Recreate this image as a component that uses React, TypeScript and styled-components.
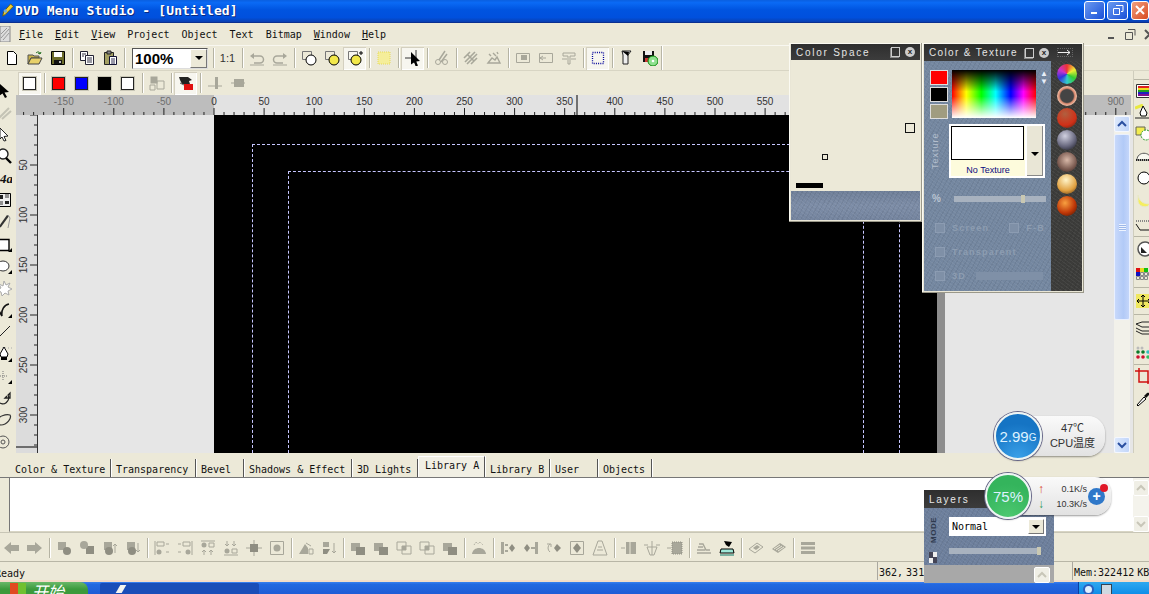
import React, { ReactNode } from 'react';
import styled, { createGlobalStyle } from 'styled-components';

const Global = createGlobalStyle`
  html, body { margin: 0; padding: 0; background: #ece9d8; overflow: hidden; }
  * { box-sizing: border-box; }
`;

const mono = `"DejaVu Sans Mono", "Liberation Mono", monospace`;
const sans = `"Liberation Sans", Arial, "Noto Sans CJK SC", sans-serif`;
const g = '#a8a79a';
const gd = '#8f8e82';
const grain = `
  repeating-linear-gradient(37deg, rgba(255,255,255,.05) 0 1px, transparent 1px 3px),
  repeating-linear-gradient(-61deg, rgba(0,0,0,.06) 0 1px, transparent 1px 4px)`;

const icons: Record<string, ReactNode> = {
  new: <path d="M3.5 1.5h6l3 3v10h-9z" fill="#fff" stroke="#000" />,
  open: <><path d="M1 5h5l1 1h5v2H4l-3 6z" fill="#c9b24a" stroke="#555" /><path d="M1 14l3-6h11l-3 6z" fill="#e8d16a" stroke="#444" /><path d="M9 3c2-2 4-1 4 1m0 0l-2-1m2 1l1-2" fill="none" stroke="#1a6a1a" /></>,
  save: <><path d="M1.5 1.5h13v13h-13z" fill="#6b6b2a" stroke="#000" /><path d="M4 2h8v5H4z" fill="#fff" /><path d="M4 10h8v4H4z" fill="#111" /><path d="M9 11h2v2H9z" fill="#bbb" /></>,
  copy: <><path d="M1.5 1.5h7v9h-7z" fill="#fff" stroke="#223" /><path d="M6.5 5.5h8v9h-8z" fill="#fff" stroke="#223" /><path d="M8 8h5M8 10h5M8 12h5M3 4h4M3 6h2" stroke="#334" /></>,
  paste: <><path d="M2.5 2.5h9v12h-9z" fill="#a39f62" stroke="#222" /><path d="M5 1h4v3H5z" fill="#888" stroke="#222" /><path d="M7.5 6.5h7v8h-7z" fill="#fff" stroke="#113" /><path d="M9 9h4M9 11h4M9 13h4" stroke="#335" /></>,
  undo: <><path d="M3 6h8a3 3 0 010 7H5" fill="none" stroke={g} strokeWidth="1.5" /><path d="M1 6l4-3v6z" fill={g} /><path d="M1 15h14" stroke={g} /></>,
  redo: <><path d="M13 6H5a3 3 0 000 7h6" fill="none" stroke={g} strokeWidth="1.5" /><path d="M15 6l-4-3v6z" fill={g} /><path d="M1 15h14" stroke={g} /></>,
  shape1: <><path d="M1.5 1.5h9v8h-9z" fill="none" stroke="#777" /><circle cx="10" cy="10" r="5" fill="#fff" stroke="#000" /></>,
  shape2: <><path d="M1.5 1.5h9v8h-9z" fill="none" stroke="#777" /><circle cx="10" cy="10" r="5" fill="#f2e84a" stroke="#000" /></>,
  shape3: <><path d="M1.5 1.5h9v8h-9z" fill="none" stroke="#777" /><circle cx="9" cy="10" r="5" fill="#f2e84a" stroke="#000" /><path d="M14 1v4M12 3h4" stroke="#000" /></>,
  dots: <path d="M2 2h12v12H2z" fill="#f5ee9a" stroke="#e6da58" strokeDasharray="1 1" />,
  pick: <><path d="M0 8h6M11 0v16" stroke="#333" /><path d="M6 2l9 9-4 .5 2 4-2 1-2-4-3 2z" fill="#000" /></>,
  cut: <><path d="M11 1L5 10M13 4L7 12" stroke={g} strokeWidth="1.5" /><circle cx="4" cy="12" r="2.5" fill="none" stroke={g} /><circle cx="11" cy="12" r="2.5" fill="none" stroke={g} /></>,
  hatch: <path d="M2 12L12 2M4 14L14 4M1 8l6-6M8 14l6-6M5 5l6 6" stroke={g} strokeWidth="1.6" />,
  spark: <path d="M3 4l2 2M11 2l1 2M2 13l4-5 3 2 2-3 3 6zM7 3l3 3" stroke={g} fill="none" strokeWidth="1.4" />,
  boxa: <><path d="M1.5 3.5h13v9h-13z" fill="none" stroke={g} /><path d="M6 5h6v5H6z" fill={g} /></>,
  boxb: <><path d="M1.5 3.5h13v9h-13zM1 8h7" fill="none" stroke={g} /><path d="M5 6L2 8l3 2" fill="none" stroke={g} /></>,
  boxc: <path d="M2 3h12v3H9v8H7V6H2zM1 9h5m4 0h5" fill="none" stroke={g} />,
  frame: <path d="M2.5 2.5h11v11h-11z" fill="none" stroke="#00009a" strokeDasharray="1 1.2" strokeWidth="1.3" />,
  wand: <><path d="M3 1h9l-3 4v9h-5V5z" fill="#eee" stroke="#222" /><path d="M3 1l7 1-1 4z" fill="#000" /></>,
  disk: <><path d="M1 1h11v11H1z" fill="#111" /><path d="M3 1h7v4H3z" fill="#eee" /><path d="M3 8h6v4H3z" fill="#c33" /><circle cx="11" cy="11" r="5" fill="#8ee08e" stroke="#0a8a0a" /><circle cx="11" cy="11" r="1.3" fill="#fff" /></>,
  layout2: <><path d="M1.5 1.5h7v7h-7z" fill={g} /><path d="M8 6h7v8H8z" fill="none" stroke={g} /><path d="M1 10h5v5H1z" fill="none" stroke={g} /></>,
  over1: <><path d="M1 3h9v8H1z" fill={g} /><path d="M6 7h9v8H6z" fill={gd} /></>,
  over2: <><path d="M1 2h9v8H1z" fill="none" stroke={g} /><path d="M6 6h9v8H6z" fill="none" stroke={g} /><path d="M6 6h4v4H6z" fill={g} /></>,
  mask: <><path d="M1 2h9l4 3-3 1 1 3H4L2 5z" fill="#222" /><path d="M6 9h9v6H6z" fill="#e01010" /><path d="M2 8l4 2" stroke="#555" /></>,
  weight: <><path d="M1 11h14" stroke={g} /><path d="M8 2h3v12H8z" fill={g} /></>,
  weight2: <><path d="M1 8h14" stroke={g} /><path d="M4 4h10v8H4z" fill={g} /></>,
  d1: <><path d="M2 2h8v8H2z" fill={g} /><circle cx="11" cy="11" r="4" fill={gd} /></>,
  d2: <><path d="M7 6h8v8H7z" fill={gd} /><circle cx="5" cy="5" r="4" fill={g} /></>,
  d3: <><path d="M2 2h8v8H2z" fill={g} /><circle cx="7" cy="11" r="4" fill={gd} /><path d="M13 13V4m-2 2l2-2 2 2" fill="none" stroke={g} /></>,
  d4: <><path d="M2 2h8v8H2z" fill={g} /><circle cx="7" cy="11" r="4" fill={gd} /><path d="M13 3v9m-2-2l2 2 2-2" fill="none" stroke={g} /></>,
  al1: <><path d="M1 1v14" stroke={g} /><path d="M3 2h7v4H3z" fill="none" stroke={g} /><circle cx="5" cy="12" r="2.5" fill={g} /><path d="M15 4h-3m0 8h3" stroke={g} /></>,
  al2: <><path d="M15 1v14" stroke={g} /><path d="M6 2h7v4H6z" fill="none" stroke={g} /><circle cx="11" cy="12" r="2.5" fill={g} /><path d="M1 4h3m0 8H1" stroke={g} /></>,
  al3: <><path d="M1 1h14" stroke={g} /><circle cx="4" cy="5" r="2.5" fill={g} /><path d="M9 3h5v4H9z" fill="none" stroke={g} /><path d="M4 15v-5m-2 2l2-2 2 2M11 15v-5m-2 2l2-2 2 2" fill="none" stroke={g} /></>,
  al4: <><path d="M1 15h14" stroke={g} /><circle cx="4" cy="11" r="2.5" fill={g} /><path d="M9 9h5v4H9z" fill="none" stroke={g} /><path d="M4 1v5M2 4l2 2 2-2M11 1v5M9 4l2 2 2-2" fill="none" stroke={g} /></>,
  al5: <><path d="M0 8h16M8 0v16" stroke={g} /><path d="M4 4h8v8H4z" fill={gd} /></>,
  al6: <><path d="M1.5 1.5h13v13h-13z" fill="none" stroke={g} /><circle cx="8" cy="8" r="3.5" fill={g} /></>,
  tr1: <><path d="M1 14l6-10 3 4v6z" fill={g} /><path d="M11 14h4V9h-4zM8 3l5 3" stroke={g} fill="none" /></>,
  tr2: <><path d="M2 2h6v5H2z" fill={g} /><path d="M2 9h7l-3 5H2z" fill={gd} /><path d="M13 3v10m-2-2l2 2 2-2" stroke={g} fill="none" /></>,
  abc: <><path d="M1 14c1-8 13-8 14 0z" fill={g} /><path d="M3 5l2-3 2 2 2-2 3 3" stroke={g} fill="none" strokeDasharray="1 1" /></>,
  n1: <><path d="M1 2h3v12H1zM5 4h3v2H5zM5 10h3v2H5z" fill={g} /><path d="M9 8l3-4 3 4-3 4z" fill={gd} /></>,
  n2: <><path d="M1 8l3-4 3 4-3 4z" fill={gd} /><path d="M12 2h3v12h-3zM8 7h4v2H8z" fill={g} /></>,
  n3: <><path d="M4 4a5 5 0 000 8" stroke={g} fill="none" /><path d="M8 8l3-4 4 4-4 4z" fill={gd} /><path d="M1 4h4v3" stroke={g} fill="none" /></>,
  n4: <><path d="M1.5 1.5h13v13h-13z" fill="none" stroke={g} /><path d="M4 8l4-5 4 5-4 5z" fill={gd} /></>,
  n5: <path d="M1 15L6 1h4l5 14zM5 10h6M6 7h4" stroke={g} fill="none" />,
  m1: <><path d="M0 8h4" stroke={g} /><path d="M5 2h10v12H5z" fill={g} /><path d="M9 2v12" stroke="#ece9d8" /></>,
  m2: <><path d="M0 5h4M12 5h4M8 1v14" stroke={g} /><path d="M3 7h10l-3 8H6z" fill="none" stroke={g} /></>,
  m3: <><path d="M0 8h4" stroke={g} /><path d="M5 2h10v12H5z" fill={g} stroke={gd} strokeDasharray="1 1" /></>,
  e1: <path d="M1 13h14M3 4h4l3 6h4M1 10h8M2 7h5" stroke={g} fill="none" strokeWidth="1.4" />,
  e2: <><path d="M2 9h12l1 4H1z" fill="#9fe8d8" stroke="#000" /><path d="M5 1l8 1-3 5-3-2z" fill="#000" /><path d="M1 15h14" stroke="#0a7a6a" /></>,
  p1: <><path d="M1 9l8-6 6 4-8 6z" fill="none" stroke={g} /><path d="M5 8l4-3 3 2-4 3z" fill={g} /></>,
  p2: <><path d="M1 9l8-6 6 4-8 6z" fill={g} /><path d="M3 9l6-4M5 10l6-4M7 11l6-4" stroke="#ece9d8" /></>,
  st: <><path d="M1 2h14v3H1zM1 6.5h14v3H1zM1 11h14v3H1z" fill={g} /></>,
  arrL: <path d="M0 8l7-6v3h8v6H7v3z" fill={g} />,
  arrR: <path d="M15 8L8 2v3H0v6h8v3z" fill={g} />,
  arrow: <path d="M3 1l10 9-4.500 .5 2.500 4.500-2 1-2.500-4.500L3 14z" fill="#000" />,
  ghost: <path d="M3 14L13 4M6 15L15 7" stroke="#c4c3b5" strokeWidth="2" />,
  arrow2: <path d="M4 2l8 8-4 .5 2 4-2 .5-2-4-2 2z" fill="#fff" stroke="#222" />,
  mag: <><circle cx="7" cy="6" r="5" fill="#fff" stroke="#222" strokeWidth="1.4" /><path d="M10 10l5 5" stroke="#000" strokeWidth="2.4" /></>,
  text: <text x="4" y="13" fontFamily="Liberation Serif, serif" fontStyle="italic" fontWeight="700" fontSize="13" fill="#111">4a</text>,
  grid: <><path d="M1.500 1.500h13v13h-13z" fill="#eee" stroke="#000" /><path d="M4 3h3v4H4zM9 9h4v3H9z" fill="#222" /><path d="M9 3h4M9 5h4M3 10h4M3 12h4" stroke="#333" /></>,
  knife: <><path d="M11 1L3 12l-2 3 4-2L13 2z" fill="#333" /><path d="M12 1l2 3-2 10" stroke="#999" fill="none" /></>,
  rect: <><path d="M1 3.500h12v11H1z" fill="#fff" stroke="#000" strokeWidth="1.4" /><path d="M16 12v4h-4z" fill="#000" /></>,
  oval: <><ellipse cx="7" cy="8" rx="6" ry="5" fill="#fff" stroke="#333" /><path d="M16 12v4h-4z" fill="#000" /></>,
  star: <path d="M8 1l2 4 4-2-2 4 4 2-4 2 1 4-4-2-3 3-1-4-4-2 4-2-2-4 4 2z" fill="#fff" stroke="#aaa" />,
  check: <><path d="M13 2C8 3 5 8 6 14L3 9" stroke="#111" fill="none" strokeWidth="1.6" /><path d="M16 12v4h-4z" fill="#000" /></>,
  line: <path d="M1 15L14 2" stroke="#222" />,
  pen: <><path d="M8 1l4 7-1 3H5L4 8z" fill="#fff" stroke="#000" /><path d="M5 11h6v3H5z" fill="#000" /><path d="M16 12v4h-4z" fill="#000" /><path d="M0 2h16" stroke="#aaa" strokeDasharray="1 2" /></>,
  plus: <><path d="M2 8h9M7 3v9" stroke="#777" strokeDasharray="1 1" /><path d="M16 12v4h-4z" fill="#000" /></>,
  rot: <path d="M2 4a6 6 0 1010 1l2-2v5H9l2-2" fill="none" stroke="#222" strokeWidth="1.3" />,
  blob: <path d="M1 9c1-5 9-7 13-6 2 3-3 10-9 10-3 0-4-2-4-4z" fill="none" stroke="#333" strokeWidth="1.2" />,
  ring: <><circle cx="7" cy="8" r="6" fill="none" stroke="#555" /><circle cx="7" cy="8" r="2" fill="none" stroke="#555" /></>,
  rainbow: <><path d="M1.500 1.500h14v13h-14z" fill="#fff" stroke="#333" /><path d="M3 3h13v2H3z" fill="#e02020" /><path d="M3 5h13v2H3z" fill="#eedc20" /><path d="M3 7h13v2H3z" fill="#20a020" /><path d="M3 9h13v2H3z" fill="#2020c0" /><path d="M3 11h13v2H3z" fill="#801090" /></>,
  rpen: <><path d="M0 4l8-3" stroke="#e8e840" strokeWidth="3" /><path d="M8 2l4 7-1 3H6L5 9z" fill="#fff" stroke="#000" /><path d="M0 14h16" stroke="#222" /></>,
  rsel: <><path d="M1 2h9v8H1z" fill="#f2ec50" stroke="#665" /><circle cx="11" cy="10" r="5" fill="#fff" stroke="#2a9a2a" strokeDasharray="2 1" /></>,
  rruler: <><path d="M2 13c0-9 14-9 14 0z" fill="#f8f8f0" stroke="#555" /><path d="M1 13h15" stroke="#222" strokeWidth="2" strokeDasharray="1 1" /></>,
  rcircle: <circle cx="9" cy="8" r="6" fill="#fff" stroke="#000" />,
  rban: <path d="M3 1c1 6 5 9 12 9-2 4-10 4-12-2z" fill="#f5ee60" stroke="#e8e8c8" />,
  rpara: <><path d="M1 4h15" stroke="#888" strokeWidth="2" strokeDasharray="1 1" /><path d="M1 7l4 6h11" stroke="#111" fill="none" /></>,
  rbtn: <><circle cx="10" cy="8" r="7" fill="#fff" stroke="#555" strokeWidth="1.5" /><path d="M6 12V6l6 6z" fill="#222" /></>,
  rclr: <><path d="M1 2h4v4H1z" fill="#e01010" /><path d="M5 2h4v4H5z" fill="#e8d820" /><path d="M9 2h4v4H9z" fill="#10c010" /><path d="M1 6h4v4H1z" fill="#1010c0" /><path d="M5.500 6.500h3v3h-3zM9.500 6.500h3v3h-3zM13.500 6.500h3v3h-3zM1.500 10.500h3v3h-3zM5.500 10.500h3v3h-3zM9.500 10.500h3v3h-3z" fill="none" stroke="#888" /></>,
  rmove: <><path d="M1 1h15v14H1z" fill="#f0e860" /><path d="M8 2v12M2 8h13M8 2L6 4m2-2l2 2M8 14l-2-2m2 2l2-2M2 8l2-2M2 8l2 2M15 8l-2-2m2 2l-2 2" stroke="#000" fill="none" /></>,
  rlay: <path d="M1 5l6-2h9M1 5l6 3h9M1 9l6 3h9M1 12l6 3h9" stroke="#222" fill="none" />,
  rdots: <><circle cx="3" cy="4" r="1.500" fill="#bbb" /><circle cx="7" cy="4" r="1.500" fill="#bbb" /><circle cx="3" cy="8" r="1.800" fill="#0a7a2a" /><circle cx="8" cy="8" r="1.800" fill="#0a7a2a" /><circle cx="13" cy="8" r="1.800" fill="#30c0c0" /><circle cx="3" cy="13" r="1.800" fill="#d01030" /><circle cx="8" cy="13" r="1.800" fill="#d01030" /><circle cx="13" cy="13" r="1.800" fill="#30c060" /></>,
  rcrop: <path d="M4 0v14h12M0 3h13v13" stroke="#d01010" fill="none" strokeWidth="1.500" />,
  rdrop: <><path d="M3 15l-1-1 7-8 2 2z" fill="#fff" stroke="#000" /><path d="M9 5l3-3c2-1 3 1 2 2l-3 3z" fill="#111" /></>,
  logo: <><path d="M2 15l1-5 8-9 3 3-9 9z" fill="#f4d030" stroke="#665a10" /><circle cx="5" cy="9" r="2" fill="#7ac" /></>,
  doc: <><path d="M0 0h10v16H0z" fill="#ddd" stroke="#888" /><path d="M1 12L9 3M1 8l6-6M3 14l6-7" stroke="#999" /></>,
};

const Icon = ({ name, size = 16 }: { name: string; size?: number }) => (
  <svg width={size} height={size} viewBox="0 0 16 16" style={{ display: 'block', flex: 'none' }}>{icons[name]}</svg>
);

const Root = styled.div`
  position: relative; width: 1149px; height: 594px; overflow: hidden;
  display: flex; flex-direction: column; background: #ece9d8;
  font-family: ${mono}; font-size: 10px; color: #111;
`;
const TitleBar = styled.div`
  height: 23px; flex: none; display: flex; align-items: center; padding: 0 0 2px 1px;
  background: linear-gradient(180deg, #0a5fe0 0%, #0a6af5 12%, #0054e0 45%, #0050dd 80%, #0a3fb0 100%);
  border-bottom: 1px solid #0a2f90;
`;
const TitleText = styled.div`
  flex: 1; color: #fff; font: 700 13px ${mono}; letter-spacing: .13px; text-shadow: 1px 1px 0 #0a2a80; white-space: nowrap;
`;
const WinButton = styled.div<{ $close?: boolean }>`
  width: ${p => (p.$close ? '18px' : '21px')}; height: 19px; margin-left: ${p => (p.$close ? '3px' : '2px')};
  border: 1px solid #fff; border-radius: 3px; display: flex; align-items: center; justify-content: center;
  background: ${p => (p.$close ? 'linear-gradient(135deg,#f0a080,#d84a20)' : 'linear-gradient(135deg,#6a9af0,#1a50d8)')};
`;
const MenuBar = styled.div`
  height: 22px; flex: none; display: flex; align-items: center; background: #ece9d8; overflow: hidden;
`;
const MenuDoc = styled.div` width: 13px; display: flex; flex: none; `;
const MenuItem = styled.span` padding: 0 6px; white-space: pre; `;
const Ul = styled.span` text-decoration: underline; `;
const MdiButtons = styled.div` margin: 0 -6px 0 auto; display: flex; gap: 8px; color: #444; align-items: center; `;
const MdiGlyph = styled.div` width: 11px; height: 11px; display: flex; `;
const ToolRow = styled.div`
  height: 26px; flex: none; display: flex; align-items: center; background: #ece9d8;
  border-top: 1px solid #f8f7f0; border-bottom: 1px solid #d8d5c4;
`;
const ToolGroup = styled.div`
  display: flex; align-items: center; height: 100%; border-right: 1px solid #b8b6a6; box-shadow: 1px 0 0 #fff;
`;
const Btn = styled.div<{ $w?: number; $active?: boolean }>`
  width: ${p => p.$w ?? 23}px; height: 23px; flex: none; display: flex; align-items: center; justify-content: center;
  ${p => p.$active && 'background: #f7f6ef; box-shadow: inset 1px 1px 0 #d4d0c0, inset -1px -1px 0 #fff;'}
`;
const Sep = styled.div`
  width: 1px; height: 20px; margin: 0 2px 0 3px; flex: none; background: #b5b3a3; box-shadow: 1px 0 0 #fff;
`;
const Combo = styled.div`
  width: 76px; height: 21px; margin: 0 2px 0 5px; flex: none; display: flex; align-items: center; background: #fff;
  border: 1px solid #555; border-right-color: #ddd; border-bottom-color: #ddd;
  font: 700 15px ${sans}; padding-left: 2px; color: #000;
`;
const ComboBtn = styled.div`
  margin-left: auto; width: 17px; height: 19px; background: #ece9d8; display: flex; align-items: center; justify-content: center;
  border: 1px solid #fff; border-right-color: #777; border-bottom-color: #777;
`;
const Down = styled.div`
  width: 0; height: 0; border: 4px solid transparent; border-top: 4px solid #000; border-bottom: 0;
`;
const OneOne = styled.span` font: 11px ${sans}; color: #333; `;
const Workspace = styled.div` height: 382px; flex: none; display: flex; `;
const LeftTools = styled.div`
  width: 15px; flex: none; display: flex; flex-direction: column; padding-top: 8px; overflow: hidden; background: #ece9d8;
`;
const SideSlot = styled.div`
  height: 22px; flex: none; display: flex; align-items: center; margin-left: -4px; width: 18px;
`;
const Center = styled.div` flex: 1; min-width: 0; display: flex; flex-direction: column; `;
const SecondBar = styled.div`
  height: 24px; flex: none; display: flex; align-items: center; padding-left: 3px; background: #ece9d8;
`;
const Swatch = styled.div<{ $c: string; $dark?: boolean }>`
  width: 13px; height: 13px; background: ${p => p.$c}; border: 1px solid ${p => (p.$dark ? '#000' : '#222')};
  outline: 1px solid #c8c6b6;
`;
const RulerRow = styled.div` height: 20px; flex: none; margin-left: 1px; display: flex; `;
const CanvasRow = styled.div` flex: 1; min-height: 0; display: flex; margin-left: 1px; `;
const VRulerBox = styled.div` width: 22px; flex: none; `;
const CanvasArea = styled.div`
  flex: 1; min-width: 0; background: #e6e6e6; padding-left: 176px; display: flex; overflow: hidden;
`;
const Page = styled.div`
  width: 731px; flex: none; background: #000; border-right: 8px solid #8d8d8d; display: flex; flex-direction: column;
`;
const Safe = styled.div<{ $t: number; $l: number; $r: number }>`
  flex: 1; display: flex; flex-direction: column; margin: ${p => p.$t}px ${p => p.$r}px 0 ${p => p.$l}px;
  border: 1px dashed #c6c6ff; border-bottom: 0;
`;
const VScroll = styled.div`
  width: 16px; flex: none; display: flex; flex-direction: column; background: #f2f1ea; padding-top: 1px;
`;
const ScrollBtn = styled.div`
  height: 16px; flex: none; background: linear-gradient(90deg,#dce8fc,#c2d6fa); border: 1px solid #f4f7ff; border-radius: 2px;
  display: flex; align-items: center; justify-content: center;
`;
const ScrollThumb = styled.div`
  height: 186px; margin-top: 2px; flex: none; background: linear-gradient(90deg,#c8d9fb,#b2caf7 60%,#c4d6fa);
  border: 1px solid #e9f0ff; border-radius: 2px; display: flex; align-items: center; justify-content: center;
`;
const Grip = styled.div` width: 7px; height: 7px; background: repeating-linear-gradient(180deg,#eef4ff 0 1px,#9db8e8 1px 2px); `;
const ScrollFill = styled.div` flex: 1; `;
const RightGutter = styled.div` width: 3px; flex: none; background: #e6e6e6; `;
const RightTools = styled.div`
  width: 16px; flex: none; display: flex; flex-direction: column; padding-top: 8px; overflow: hidden; background: #ece9d8;
  border-left: 1px solid #cfcdbd;
`;
const RSlot = styled.div<{ $h: number; $line?: boolean }>`
  height: ${p => p.$h}px; flex: none; display: flex; align-items: center; padding-left: 1px;
  ${p => p.$line && 'border-top: 1px solid #b8b6a6;'}
`;
const TabRow = styled.div`
  height: 25px; flex: none; display: flex; align-items: flex-end; padding-left: 10px; background: #ece9d8;
  border-bottom: 1px solid #777;
`;
const Tab = styled.div<{ $w: number; $active?: boolean }>`
  width: ${p => p.$w}px; height: ${p => (p.$active ? 21 : 18)}px; flex: none; padding: ${p => (p.$active ? '3px 0 0 6px' : '5px 0 0 5px')};
  white-space: nowrap; overflow: hidden; border-right: 1px solid #555; box-shadow: 1px 0 0 #fff;
  ${p => p.$active && 'background:#f1efe4; border-top:1px solid #fff; border-left:1px solid #fff;'}
`;
const LibraryRow = styled.div` height: 54px; flex: none; display: flex; padding-left: 9px; background: #ece9d8; `;
const LibraryBody = styled.div`
  flex: 1; background: #fff; border-left: 1px solid #777; border-bottom: 1px solid #d8d5c4;
`;
const LibScroll = styled.div`
  width: 16px; flex: none; background: #f4f3ec; display: flex; flex-direction: column; justify-content: space-between; padding: 2px 0 0;
`;
const PaleBtn = styled.div`
  width: 16px; height: 16px; background: #f0efe6; border: 1px solid #fff; border-radius: 2px; display: flex; align-items: center; justify-content: center;
`;
const BottomBar = styled.div`
  height: 30px; flex: none; display: flex; align-items: center; background: #ece9d8;
  border-top: 1px solid #c8c6b6; border-bottom: 1px solid #b8b6a6;
  padding-top: 1px;
`;
const StatusBar = styled.div`
  height: 20px; flex: none; display: flex; align-items: stretch; background: #ece9d8; border-bottom: 2px solid #f3dcc8; overflow: hidden;
`;
const StatusMain = styled.div` flex: 1; padding-top: 6px; margin-left: -5px; `;
const StatusCell = styled.div<{ $w: number }>`
  width: ${p => p.$w}px; flex: none; padding: 5px 0 0 1px; border-left: 1px solid #aaa8a0; white-space: nowrap; overflow: hidden; word-spacing: -3px;
`;
const Taskbar = styled.div`
  height: 12px; flex: none; display: flex; background: linear-gradient(180deg,#3a80f0 0,#2468e0 20%,#1f5cd6 100%); overflow: hidden;
`;
const StartBtn = styled.div`
  width: 88px; flex: none; display: flex; padding: 1px 0 0 10px; gap: 6px; border-radius: 0 8px 0 0; background: linear-gradient(180deg,#6ab868,#3c9a3c 60%);
  color: #fff; font: italic 16px "Noto Sans CJK SC", sans-serif; line-height: 17px;
`;
const Flag = styled.div` width: 16px; height: 12px; background: linear-gradient(90deg,#e04a20 50%,#70c030 50%); `;
const TaskItem = styled.div`
  width: 159px; margin: 1px 0 0 12px; flex: none; background: #1a4db8; border-radius: 2px 2px 0 0; padding: 2px 0 0 18px;
`;
const TaskGlyph = styled.div` width: 6px; height: 8px; background: #f4f4f0; transform: skewX(-30deg); `;
const Tray = styled.div`
  margin-left: auto; width: 71px; flex: none; background: linear-gradient(180deg,#30a8f0,#0f8ee8); border-left: 1px solid #0a3fa0;
  display: flex; align-items: flex-start; color: #fff; font: 12px ${sans}; padding: 2px 0 0 4px; gap: 7px;
`;
const TrayRound = styled.div` width: 11px; height: 11px; border-radius: 50%; background: #dff0ff; border: 2px solid #2a60c0; flex: none; `;
const TraySq = styled.div` width: 11px; height: 11px; background: #cfd8e0; border: 1px solid #345; flex: none; `;

const Float = styled.div<{ $x: number; $y: number; $w: number; $h: number }>`
  position: absolute; left: ${p => p.$x}px; top: ${p => p.$y}px; width: ${p => p.$w}px; height: ${p => p.$h}px;
  display: flex; flex-direction: column; background: #e9e6d6; padding: 1px 2px 2px;
  box-shadow: inset -1px -1px 0 #9a988a, inset 1px 1px 0 #fbfaf2;
`;
const PanelHead = styled.div<{ $h?: number; $ls?: number }>`
  height: ${p => p.$h ?? 16}px; flex: none; background: linear-gradient(180deg,#2e2e2e,#3c3c3c); color: #e4e4e4; display: flex; align-items: center; padding: 0 5px;
  font: 10px ${sans}; letter-spacing: ${p => p.$ls ?? 1.75}px; white-space: nowrap;
`;
const HeadIcons = styled.div` margin-left: auto; display: flex; gap: 5px; align-items: center; `;
const CopyGlyph = styled.div`
  width: 9px; height: 10px; border: 1px solid #ccc; box-shadow: -1px 1px 0 #888;
`;
const CloseGlyph = styled.div`
  width: 10px; height: 10px; border-radius: 50%; background: #ccc; color: #222; font: 700 8px/10px ${sans}; text-align: center; letter-spacing: 0;
`;
const ArrowBtn = styled.div`
  margin: 0 4px 0 3px; width: 16px; height: 9px; border: 1px dotted #666; display: flex; align-items: center; justify-content: center;
`;
const SpaceBody = styled.div` flex: 1; display: flex; flex-direction: column; background: #ece9d8; `;
const SpaceTop = styled.div` flex: 1; display: flex; flex-direction: column; align-items: flex-start; padding: 63px 8px 0 0; `;
const SmallSq = styled.div<{ $s: number; $ml: number; $mt: number }>`
  width: ${p => p.$s}px; height: ${p => p.$s}px; border: 1px solid #111; background: transparent; flex: none;
  margin-left: ${p => p.$ml}px; margin-top: ${p => p.$mt}px;
`;
const BlackBar = styled.div` width: 27px; height: 5px; background: #000; margin: 23px 0 0 5px; flex: none; `;
const SpaceTex = styled.div`
  height: 29px; flex: none; background: ${grain}, linear-gradient(180deg,#6f7f98,#7c8ca6 50%,#74849e);
`;
const CTBody = styled.div` flex: 1; display: flex; min-height: 0; `;
const CTMain = styled.div`
  flex: 1; background: ${grain}, #7487a0; display: flex; flex-direction: column; padding: 9px 0 0 6px; min-width: 0;
`;
const CTSide = styled.div`
  width: 31px; flex: none; background: ${grain}, #3c3c3a; display: flex; flex-direction: column; align-items: center; padding-top: 3px; gap: 2px;
`;
const Sphere = styled.div<{ $bg: string }>`
  width: 20px; height: 20px; border-radius: 50%; background: ${p => p.$bg}; flex: none;
`;
const ColorRow = styled.div` display: flex; height: 49px; `;
const ColorStack = styled.div` width: 18px; display: flex; flex-direction: column; gap: 2px; flex: none; `;
const ColorChip = styled.div<{ $bg: string }>`
  width: 18px; height: 15px; background: ${p => p.$bg}; border: 1px solid #ddd;
`;
const Spectrum = styled.div`
  width: 84px; height: 48px; margin: 0 0 0 4px; flex: none;
  background:
    linear-gradient(180deg, #000 0%, rgba(0,0,0,0) 45%, rgba(255,255,255,0) 55%, #fff 100%),
    linear-gradient(90deg, #f00, #ff0 17%, #0f0 35%, #0ff 52%, #00f 70%, #f0f 85%, #f00);
`;
const Spin = styled.div` width: 12px; margin-left: 2px; display: flex; flex-direction: column; align-items: center; gap: 2px; color: #e8eef8; font: 8px/8px ${sans}; `;
const TexRow = styled.div` display: flex; margin-top: 5px; `;
const VLabel = styled.div`
  writing-mode: vertical-rl; transform: rotate(180deg); color: #b4bfce; font: 9px ${sans}; letter-spacing: 1px; width: 15px; text-align: center; flex: none; height: 54px;
`;
const TexBox = styled.div`
  width: 96px; height: 54px; margin-left: 4px; flex: none; background: #fff; padding: 2px; display: flex;
`;
const TexLeft = styled.div` flex: 1; display: flex; flex-direction: column; background: #fdfbdc; `;
const TexPreview = styled.div` height: 34px; flex: none; background: #fff; border: 1px solid #000; margin-right: 1px; `;
const TexName = styled.div` text-align: center; color: #0a0a80; font: 9px/19px ${sans}; letter-spacing: 0; padding-top: 1px; `;
const TexBtn = styled.div`
  width: 16px; margin-left: 2px; background: #e9e6d6; border-right: 1px solid #888; border-bottom: 1px solid #888; display: flex; align-items: center; justify-content: center; padding-top: 6px;
`;
const SliderRow = styled.div<{ $mt?: number }>` display: flex; align-items: center; margin-top: ${p => p.$mt ?? 15}px; color: #b9c4d2; font: 700 10px ${sans}; `;
const PctLabel = styled.div` width: 24px; padding-left: 2px; flex: none; `;
const Track = styled.div<{ $w: number }>`
  width: ${p => p.$w}px; height: 6px; background: #a8b2bf; flex: none; display: flex; justify-content: flex-end;
`;
const Knob = styled.div<{ $r: number }>`
  width: 4px; height: 8px; margin-top: -1px; margin-right: ${p => p.$r}px; background: #c9c8b2;
`;
const OptRow = styled.div<{ $mt: number }>`
  display: flex; align-items: center; margin-top: ${p => p.$mt}px; color: #8d9db1; font: 700 9px ${sans}; letter-spacing: 1.2px; white-space: nowrap;
`;
const Check = styled.div<{ $ml?: number }>`
  width: 10px; height: 10px; margin: 0 7px 0 ${p => p.$ml ?? 0}px; background: #7f90a7; border: 1px solid #8c9cb2; flex: none;
`;
const Dim = styled.div` flex: 1; height: 8px; margin: 0 8px 0 10px; background: #7f90a7; `;

const Widget = styled.div<{ $x: number; $y: number }>`
  position: absolute; left: ${p => p.$x}px; top: ${p => p.$y}px; display: flex; align-items: center; font-family: ${sans}, "Noto Sans CJK SC";
`;
const Orb = styled.div<{ $c1: string; $c2: string; $s: number }>`
  width: ${p => p.$s}px; height: ${p => p.$s}px; flex: none; border-radius: 50%; position: relative; z-index: 1;
  border: 2px solid #eef5f4; box-shadow: 0 0 0 1px #668, 0 1px 2px rgba(0,0,0,.3);
  background: radial-gradient(circle at 50% 100%, ${p => p.$c2}, ${p => p.$c1} 70%);
  color: #dff2ff; display: flex; align-items: center; justify-content: center; font-size: 15px;
`;
const SmallG = styled.span` font-size: 10px; margin-top: 2px; `;
const Pill = styled.div<{ $w: number; $h: number }>`
  width: ${p => p.$w}px; height: ${p => p.$h}px; margin-left: -12px; border-radius: 0 ${p => p.$h / 2 - 3}px ${p => p.$h / 2 - 3}px 0;
  background: linear-gradient(180deg,#fafafa,#e2e2e2); box-shadow: 0 1px 2px rgba(0,0,0,.4);
  display: flex; color: #333;
`;
const CpuText = styled.div`
  flex: 1; padding-left: 10px; display: flex; flex-direction: column; align-items: center; justify-content: center; font-size: 11px; line-height: 15px;
`;
const NetGrid = styled.div`
  flex: 1; padding: 0 0 0 16px; display: grid; grid-template-columns: 12px 38px; grid-auto-rows: 15px; align-content: center; font-size: 9px; column-gap: 2px; text-align: right; align-items: center;
`;
const Up = styled.span<{ $c: string }>` color: ${p => p.$c}; font-size: 12px; font-weight: 700; text-align: center; `;
const PlusOrb = styled.div`
  width: 17px; height: 17px; border-radius: 50%; background: #2f78c9; color: #fff; font: 700 14px/16px ${sans}; text-align: center; margin: 11px 6px 0 0; position: relative; flex: none;
`;
const RedDot = styled.div`
  position: absolute; right: -3px; top: -4px; width: 8px; height: 8px; border-radius: 50%; background: #e01828;
`;
const LayersPanel = styled.div`
  position: absolute; left: 924px; top: 490px; width: 130px; height: 92px; display: flex; flex-direction: column; background: #8f8f8f;
`;
const LayersBody = styled.div` height: 57px; flex: none; background: ${grain}, #6d7f9c; display: flex; padding: 9px 0 0 5px; `;
const LayersCol = styled.div` width: 20px; flex: none; display: flex; flex-direction: column; color: #2f3a4e; font: 700 8px ${sans}; letter-spacing: .5px; `;
const ModeText = styled.div` writing-mode: vertical-rl; transform: rotate(180deg); height: 27px; text-align: center; `;
const ThumbGlyph = styled.div`
  width: 8px; height: 11px; margin-top: 8px; background: conic-gradient(#eee 25%, #445 0 50%, #eee 0 75%, #445 0);
`;
const LayersMain = styled.div` flex: 1; padding-right: 8px; `;
const Select = styled.div`
  height: 19px; background: #fff; display: flex; align-items: center; padding-left: 3px; color: #000;
`;
const SelBtn = styled.div`
  margin-left: auto; width: 16px; height: 15px; margin-right: 2px; background: #ece9d8; border: 1px solid #fff; border-right-color: #777; border-bottom-color: #777;
  display: flex; align-items: center; justify-content: center;
`;
const LayersFoot = styled.div` flex: 1; display: flex; justify-content: flex-end; padding: 2px 4px 0 0; background: #a8a8a8; `;
const LayersHeadText = styled.span` color: #e8e8e8; `;

const Chevron = ({ up, c = '#2a4fa0' }: { up?: boolean; c?: string }) => (
  <svg width="10" height="8" viewBox="0 0 10 8" style={{ display: 'block' }}>
    <path d={up ? 'M1 6l4-4 4 4' : 'M1 2l4 4 4-4'} fill="none" stroke={c} strokeWidth="2" />
  </svg>
);

const HRuler = () => {
  const w = 1115, o = 198;
  const ticks: ReactNode[] = [];
  for (let v = -190; v <= 920; v += 10) {
    const x = o + v * 1.002;
    const major = v % 50 === 0;
    ticks.push(<path key={v} d={`M${x} ${major ? 13 : 17}V20`} stroke="#222" />);
    if (major) ticks.push(
      <text key={`t${v}`} x={x} y={10} textAnchor="middle" fontFamily="Liberation Sans, sans-serif" fontSize="10" fill={v < 0 || v > 720 ? '#6f6f6f' : '#333'}>{v}</text>
    );
  }
  return (
    <svg width={w} height={20} style={{ display: 'block' }}>
      <rect width={w} height={20} fill="#e2e2e2" />
      <rect width={o} height={20} fill="#bdbdbd" />
      <rect x={o + 722} width={w - o - 722} height={20} fill="#bdbdbd" />
      {ticks}
      <path d="M561 0V20" stroke="#000" />
    </svg>
  );
};

const VRuler = () => {
  const ticks: ReactNode[] = [];
  for (let v = 0; v <= 340; v += 10) {
    const major = v % 50 === 0;
    ticks.push(<path key={v} d={`M${major ? 14 : 18} ${v}H21`} stroke="#222" />);
    if (major && v > 0) ticks.push(
      <text key={`t${v}`} transform={`translate(11 ${v}) rotate(-90)`} textAnchor="middle" fontFamily="Liberation Sans, sans-serif" fontSize="10" fill="#333">{v}</text>
    );
  }
  return (
    <svg width={22} height={338} style={{ display: 'block' }}>
      <rect width={22} height={338} fill="#dcdcdc" />
      <path d="M21.500 0V338" stroke="#333" />
      {ticks}
      <path d="M0 332H21" stroke="#000" />
    </svg>
  );
};

const Bt = ({ n, a }: { n: string; a?: boolean }) => <Btn $active={a}><Icon name={n} /></Btn>;

const menus: [string, boolean][] = [['File', true], ['Edit', true], ['View', true], ['Project', false], ['Object', false], ['Text', false], ['Bitmap', false], ['Window', true], ['Help', true]];
const leftTools = ['arrow', 'ghost', 'arrow2', 'mag', 'text', 'grid', 'knife', 'rect', 'oval', 'star', 'check', 'line', 'pen', 'plus', 'rot', 'blob', 'ring'];
const rightTools: [string, number, boolean?][] = [['rainbow', 22, true], ['rpen', 21], ['rsel', 22], ['rruler', 22], ['rcircle', 23], ['rban', 25], ['rpara', 22], ['rbtn', 25, true], ['rclr', 26], ['rmove', 27, true], ['rlay', 25, true], ['rdots', 25], ['rcrop', 23, true], ['rdrop', 23]];
const tabs: [string, number, boolean?][] = [['Color & Texture', 101], ['Transparency', 85], ['Bevel', 48], ['Shadows & Effect', 108], ['3D Lights', 66], ['Library A', 67, true], ['Library B', 65], ['User', 48], ['Objects', 54]];
const bottom = [['arrL', 'arrR'], ['d1', 'd2', 'd3', 'd4'], ['al1', 'al2', 'al3', 'al4', 'al5', 'al6'], ['tr1', 'tr2'], ['over1', 'over1', 'over2', 'over2', 'over1'], ['abc'], ['n1', 'n2', 'n3', 'n4', 'n5'], ['m1', 'm2', 'm3'], ['e1', 'e2'], ['p1', 'p2'], ['st']];
const spheres = [
  'conic-gradient(#e33,#ee3,#3c3,#3cc,#33d,#c3c,#e33)',
  'radial-gradient(circle,#444 45%,#d98a70 55%,#f0c0a8 70%,#5a4038 80%)',
  'radial-gradient(circle at 40% 30%,#b06040,#d03018 60%,#502010)',
  'radial-gradient(circle at 40% 30%,#d0d0e0,#6a6a80 55%,#101018)',
  'radial-gradient(circle at 50% 40%,#d8b8a8,#7a5a50 60%,#302020)',
  'radial-gradient(circle at 45% 30%,#fff4c8,#e0a040 60%,#503010)',
  'radial-gradient(circle at 40% 35%,#f8a040,#c03808 55%,#401000)',
];

export default function App() {
  return (
    <Root>
      <Global />
      <TitleBar>
        <Icon name="logo" size={14} />
        <TitleText>DVD Menu Studio - [Untitled]</TitleText>
        <WinButton><svg width="10" height="10"><path d="M1 7h6v2H1z" fill="#fff" /></svg></WinButton>
        <WinButton><svg width="12" height="12"><path d="M4 1.500h7v6H9M1.500 4.500h6v6h-6z" fill="none" stroke="#fff" /></svg></WinButton>
        <WinButton $close><svg width="12" height="12"><path d="M2 2l8 8M10 2l-8 8" stroke="#fff" strokeWidth="2" /></svg></WinButton>
      </TitleBar>
      <MenuBar>
        <MenuDoc><Icon name="doc" /></MenuDoc>
        {menus.map(([m, u]) => (
          <MenuItem key={m}>{u ? <><Ul>{m[0]}</Ul>{m.slice(1)}</> : m}</MenuItem>
        ))}
        <MdiButtons>
          <MdiGlyph><svg width="11" height="11"><path d="M2 8h6v2H2z" fill="#555" /></svg></MdiGlyph>
          <MdiGlyph><svg width="11" height="11"><path d="M3 .5h7v6M.5 3.500h7v7h-7z" fill="none" stroke="#555" /></svg></MdiGlyph>
          <MdiGlyph><svg width="11" height="11"><path d="M1 1l9 9M10 1l-9 9" stroke="#555" strokeWidth="2" /></svg></MdiGlyph>
        </MdiButtons>
      </MenuBar>
      <ToolRow>
        <ToolGroup>
          <Bt n="new" /><Bt n="open" /><Bt n="save" /><Sep />
          <Bt n="copy" /><Bt n="paste" /><Sep />
          <Combo>100%<ComboBtn><Down /></ComboBtn></Combo><Sep />
          <Btn><OneOne>1:1</OneOne></Btn><Sep />
          <Bt n="undo" /><Bt n="redo" /><Sep />
          <Bt n="shape1" /><Bt n="shape2" /><Bt n="shape3" a /><Sep />
          <Bt n="dots" /><Sep /><Bt n="pick" a /><Sep /><Bt n="cut" /><Sep />
          <Bt n="hatch" /><Bt n="spark" /><Sep />
          <Bt n="boxa" /><Bt n="boxb" /><Bt n="boxc" /><Sep />
          <Bt n="frame" a /><Sep /><Bt n="wand" /><Bt n="disk" />
        </ToolGroup>
      </ToolRow>
      <Workspace>
        <LeftTools>
          {leftTools.map((t, i) => <SideSlot key={i}><Icon name={t} /></SideSlot>)}
        </LeftTools>
        <Center>
          <SecondBar>
            <Btn $active><Swatch $c="#fff" /></Btn><Sep />
            <Btn><Swatch $c="#f00" /></Btn><Btn><Swatch $c="#00f" /></Btn>
            <Btn><Swatch $c="#000" $dark /></Btn><Btn><Swatch $c="#fff" /></Btn><Sep />
            <Bt n="layout2" /><Sep /><Bt n="mask" a /><Sep /><Bt n="weight" /><Bt n="weight2" />
          </SecondBar>
          <RulerRow><HRuler /></RulerRow>
          <CanvasRow>
            <VRulerBox><VRuler /></VRulerBox>
            <CanvasArea>
              <Page>
                <Safe $t={29} $l={38} $r={37}>
                  <Safe $t={26} $l={35} $r={35} />
                </Safe>
              </Page>
            </CanvasArea>
            <VScroll>
              <ScrollBtn><Chevron up /></ScrollBtn>
              <ScrollThumb><Grip /></ScrollThumb>
              <ScrollFill />
              <ScrollBtn><Chevron /></ScrollBtn>
            </VScroll>
            <RightGutter />
          </CanvasRow>
        </Center>
        <RightTools>
          {rightTools.map(([t, h, l], i) => <RSlot key={i} $h={h} $line={l}><Icon name={t} /></RSlot>)}
        </RightTools>
      </Workspace>
      <TabRow>
        {tabs.map(([t, w, a]) => <Tab key={t} $w={w} $active={a}>{t}</Tab>)}
      </TabRow>
      <LibraryRow>
        <LibraryBody />
        <LibScroll>
          <PaleBtn><Chevron up c="#c8c6b8" /></PaleBtn>
          <PaleBtn><Chevron c="#c8c6b8" /></PaleBtn>
        </LibScroll>
      </LibraryRow>
      <BottomBar>
        {bottom.map((grp, i) => (
          <React.Fragment key={i}>
            {i > 0 && <Sep />}
            {grp.map((n, j) => <Bt key={j} n={n} />)}
          </React.Fragment>
        ))}
      </BottomBar>
      <StatusBar>
        <StatusMain>Ready</StatusMain>
        <StatusCell $w={195}>362, 331</StatusCell>
        <StatusCell $w={77}>Mem:322412 KB</StatusCell>
      </StatusBar>
      <Taskbar>
        <StartBtn><Flag />开始</StartBtn>
        <TaskItem><TaskGlyph /></TaskItem>
        <Tray><TrayRound /><TraySq /></Tray>
      </Taskbar>

      <Float $x={789} $y={43} $w={133} $h={179}>
        <PanelHead>Color Space
          <HeadIcons><CopyGlyph /><CloseGlyph>x</CloseGlyph></HeadIcons>
        </PanelHead>
        <SpaceBody>
          <SpaceTop>
            <SmallSq $s={10} $ml={114} $mt={0} />
            <SmallSq $s={6} $ml={31} $mt={21} />
            <BlackBar />
          </SpaceTop>
          <SpaceTex />
        </SpaceBody>
      </Float>
      <Float $x={922} $y={43} $w={162} $h={250}>
        <PanelHead $h={17} $ls={1.35}>Color &amp; Texture
          <HeadIcons>
            <CopyGlyph /><CloseGlyph>x</CloseGlyph>
            <ArrowBtn><svg width="14" height="7"><path d="M0 3.500h12M9 1l3 2.500L9 6" fill="none" stroke="#eee" /></svg></ArrowBtn>
          </HeadIcons>
        </PanelHead>
        <CTBody>
          <CTMain>
            <ColorRow>
              <ColorStack>
                <ColorChip $bg="#f00" />
                <ColorChip $bg="#000" />
                <ColorChip $bg="#a09c80" />
              </ColorStack>
              <Spectrum />
              <Spin>▲<br />▼</Spin>
            </ColorRow>
            <TexRow>
              <VLabel>Texture</VLabel>
              <TexBox>
                <TexLeft>
                  <TexPreview />
                  <TexName>No Texture</TexName>
                </TexLeft>
                <TexBtn><Down /></TexBtn>
              </TexBox>
            </TexRow>
            <SliderRow>
              <PctLabel>%</PctLabel>
              <Track $w={92}><Knob $r={21} /></Track>
            </SliderRow>
            <OptRow $mt={19}><Check $ml={5} />Screen<Check $ml={20} />F-B</OptRow>
            <OptRow $mt={14}><Check $ml={5} />Transparent</OptRow>
            <OptRow $mt={14}><Check $ml={5} />3D<Dim /></OptRow>
          </CTMain>
          <CTSide>
            {spheres.map((b, i) => <Sphere key={i} $bg={b} />)}
          </CTSide>
        </CTBody>
      </Float>

      <LayersPanel>
        <PanelHead $h={18}><LayersHeadText>Layers</LayersHeadText></PanelHead>
        <LayersBody>
          <LayersCol><ModeText>MODE</ModeText><ThumbGlyph /></LayersCol>
          <LayersMain>
            <Select>Normal<SelBtn><Down /></SelBtn></Select>
            <SliderRow $mt={12}><Track $w={92}><Knob $r={0} /></Track></SliderRow>
          </LayersMain>
        </LayersBody>
        <LayersFoot><PaleBtn><Chevron up c="#c8c6b8" /></PaleBtn></LayersFoot>
      </LayersPanel>

      <Widget $x={994} $y={412}>
        <Orb $s={48} $c1="#1574c4" $c2="#3aa0e8">2.99<SmallG>G</SmallG></Orb>
        <Pill $w={75} $h={40}>
          <CpuText><span>47℃</span><span>CPU温度</span></CpuText>
        </Pill>
      </Widget>
      <Widget $x={985} $y={473}>
        <Orb $s={46} $c1="#34b45c" $c2="#4cc870">75%</Orb>
        <Pill $w={92} $h={38}>
          <NetGrid>
            <Up $c="#d84a30">↑</Up><span>0.1K/s</span>
            <Up $c="#2f9a5a">↓</Up><span>10.3K/s</span>
          </NetGrid>
          <PlusOrb>+<RedDot /></PlusOrb>
        </Pill>
      </Widget>
    </Root>
  );
}
